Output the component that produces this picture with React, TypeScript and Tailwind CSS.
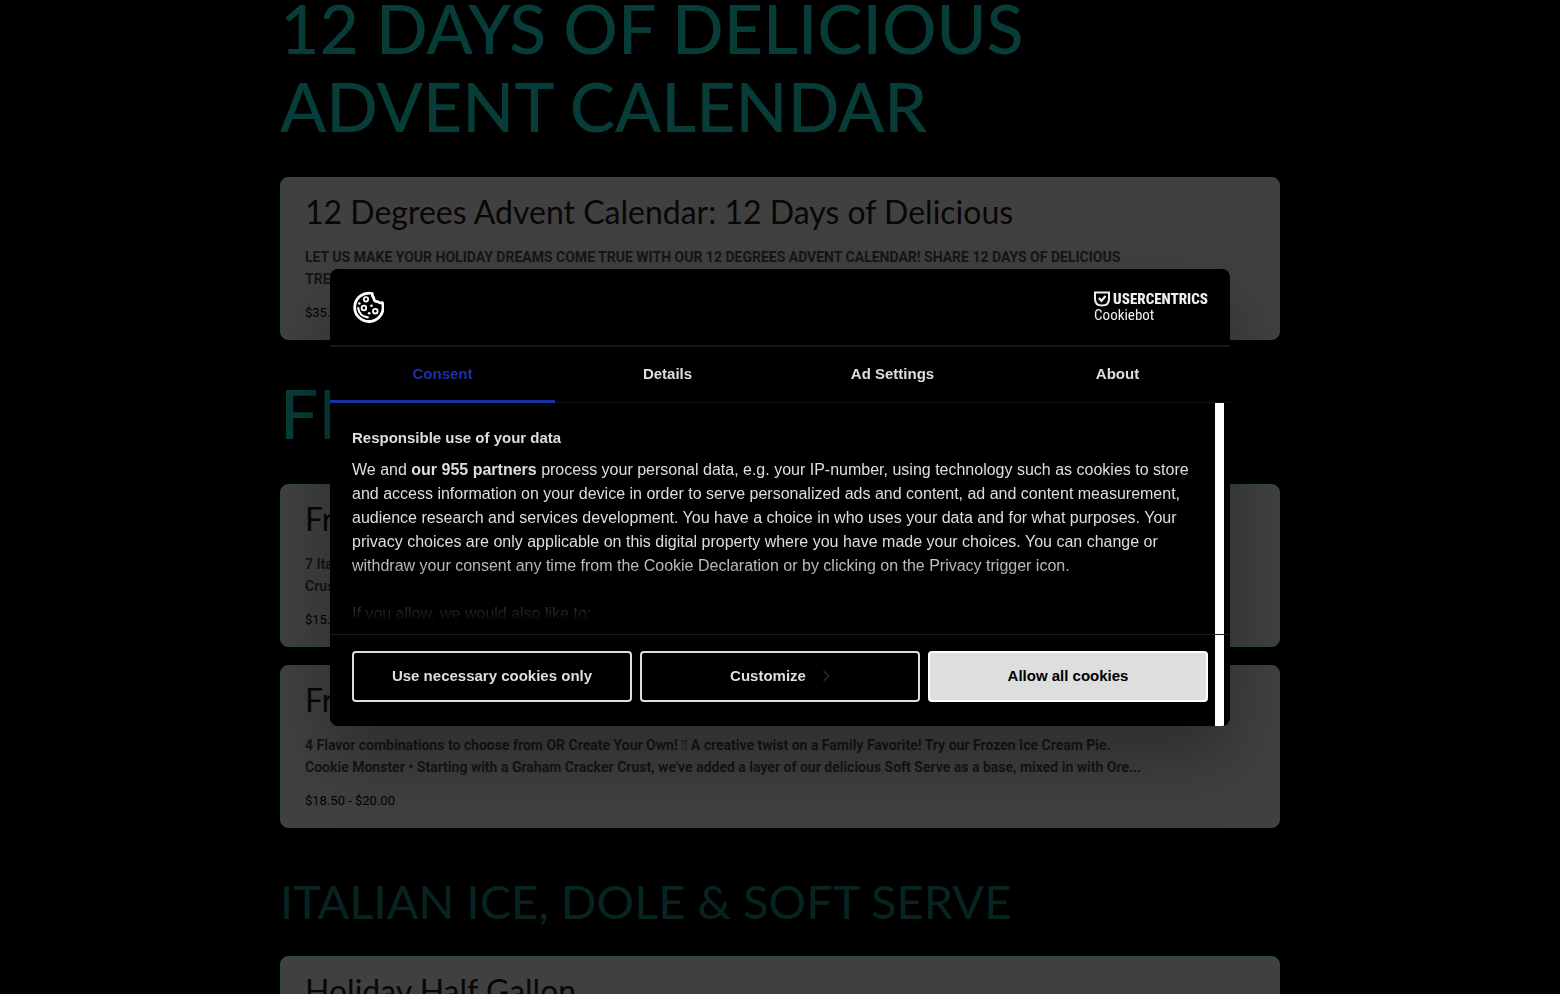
import clsx from 'clsx';

interface MenuItem {
  title: string;
  lines: string[];
  price: string;
}

interface MenuCategory {
  name: string;
  small?: boolean;
  items: MenuItem[];
}

const categories: MenuCategory[] = [
  {
    name: '12 DAYS OF DELICIOUS ADVENT CALENDAR',
    items: [
      {
        title: '12 Degrees Advent Calendar: 12 Days of Delicious',
        lines: [
          'LET US MAKE YOUR HOLIDAY DREAMS COME TRUE WITH OUR 12 DEGREES ADVENT CALENDAR! SHARE 12 DAYS OF DELICIOUS',
          'TREATS',
        ],
        price: '$35.00',
      },
    ],
  },
  {
    name: 'FROZEN PIES',
    items: [
      { title: 'Frozen Pie', lines: ['7 Italian Ice', 'Crust'], price: '$15.00' },
      {
        title: 'Frozen Pie',
        lines: [
          '4 Flavor combinations to choose from OR Create Your Own! \uE0FF A creative twist on a Family Favorite! Try our Frozen Ice Cream Pie.',
          "Cookie Monster • Starting with a Graham Cracker Crust, we've added a layer of our delicious Soft Serve as a base, mixed in with Ore...",
        ],
        price: '$18.50 - $20.00',
      },
    ],
  },
  {
    name: 'ITALIAN ICE, DOLE & SOFT SERVE',
    small: true,
    items: [{ title: 'Holiday Half Gallon', lines: [], price: '' }],
  },
];

const tabs = ['Consent', 'Details', 'Ad Settings', 'About'];

function MenuCard({ title, lines, price }: MenuItem) {
  return (
    <article className="min-h-[163px] rounded-lg border border-[#2c4844] bg-[#404040] px-6 pt-[15px]">
      <h3 className="text-[32px] leading-[38px] text-[#090606]">{title}</h3>
      <div className="mt-[15px] font-['Roboto',sans-serif] text-[14px] leading-[22px] font-bold text-[#151515]">
        {lines.map((line) => (
          <p key={line} className="whitespace-nowrap">
            {line}
          </p>
        ))}
      </div>
      <p className="mt-3 font-['Roboto',sans-serif] text-[13px] leading-[22px] text-black">{price}</p>
    </article>
  );
}

function CookieIcon() {
  return (
    <svg viewBox="0 0 32 32" className="size-8" fill="none" stroke="white" strokeLinecap="round" strokeLinejoin="round">
      <path
        strokeWidth="2.8"
        d="M20.300 2.500A14.200 14.200 0 1 0 30.300 11.600c-1.500.5-3.300.3-4.500-1-2.500.3-4.300-1.500-4-3.900-1.200-1.100-1.800-2.600-1.500-4.200Z"
      />
      <path strokeWidth="2.2" d="M6.200 17.200c.5 5 4.300 8.700 9.600 9.200" />
      <circle cx="14" cy="8.300" r="2.200" strokeWidth="1.800" />
      <circle cx="11.900" cy="17" r="2.300" strokeWidth="1.800" />
      <circle cx="23.300" cy="20.200" r="2.300" strokeWidth="1.800" />
      <g fill="white" stroke="none">
        <circle cx="7.300" cy="12.500" r="1.300" />
        <circle cx="19.500" cy="14.800" r="1.300" />
        <circle cx="17.200" cy="22.200" r="1.300" />
      </g>
    </svg>
  );
}

function Brand() {
  return (
    <a href="#cookiebot" className="block text-[#f0f0f0]" aria-label="Usercentrics Cookiebot">
      <span className="flex items-center gap-[3px]">
        <svg viewBox="0 0 16 16" className="size-4" fill="none" stroke="currentColor">
          <path strokeWidth="2" d="M1 1.500h14v6.500c0 4.200-2.600 6.500-7 6.500s-7-2.300-7-6.500Z" />
          <path strokeWidth="2.200" d="m4.800 7 2.700 2.800 4-4.800" />
        </svg>
        <span className="font-['Roboto_Condensed','Liberation_Sans_Narrow',sans-serif] text-[15px] leading-4 font-extrabold">
          USERCENTRICS
        </span>
      </span>
      <span className="block font-['Roboto_Condensed','Liberation_Sans_Narrow',sans-serif] text-[15px] leading-4">
        Cookiebot
      </span>
    </a>
  );
}

function CookieDialog() {
  return (
    <div
      role="dialog"
      aria-label="Cookie consent"
      className="w-full max-w-[900px] overflow-hidden rounded-lg bg-black font-['Liberation_Sans',sans-serif] text-[#dedede] shadow-[0_32px_68px_rgba(0,0,0,0.3)]"
    >
      <header className="flex items-center justify-between border-b-2 border-[#171717] px-[22px] py-[22px]">
        <CookieIcon />
        <Brand />
      </header>

      <nav className="grid grid-cols-4">
        {tabs.map((tab, i) => (
          <button
            key={tab}
            className={clsx(
              'h-14 text-[15px] font-bold',
              i === 0 ? 'text-[#1c31a8] shadow-[inset_0_-3px_#1c31a0]' : 'shadow-[inset_0_-1px_#111111]'
            )}
          >
            {tab}
          </button>
        ))}
      </nav>

      <div className="relative">
        <div className="absolute top-0 right-[6px] bottom-0 w-[9px] bg-white" />

        <div className="relative h-[231px] overflow-hidden px-[22px] pt-[23px]">
          <h2 className="text-[15px] leading-6 font-bold">Responsible use of your data</h2>
          <p className="mt-2 text-[16px] leading-6">
            We and <strong>our 955 partners</strong> process your personal data, e.g. your IP-number, using technology
            such as cookies to store and access information on your device in order to serve personalized ads and
            content, ad and content measurement, audience research and services development. You have a choice in who
            uses your data and for what purposes. Your privacy choices are only applicable on this digital property
            where you have made your choices. You can change or withdraw your consent any time from the Cookie
            Declaration or by clicking on the Privacy trigger icon.
          </p>
          <p className="mt-6 text-[16px] leading-6">If you allow, we would also like to:</p>
          <div className="absolute right-[15px] bottom-0 left-0 h-20 bg-linear-to-t from-black from-15% to-transparent" />
        </div>

        <footer className="relative grid grid-cols-3 gap-2 border-t border-[#1c1c1c] px-[22px] pt-4 pb-6 text-[15px] font-bold">
          <button className="h-[51px] rounded border-2 border-[#dedede]">Use necessary cookies only</button>
          <button className="flex h-[51px] items-center justify-center gap-4 rounded border-2 border-[#dedede]">
            Customize
            <svg viewBox="0 0 8 14" className="h-3.5 w-2 text-[#222222]" fill="none" stroke="currentColor" strokeWidth="2">
              <path d="m1.500 2 5 5-5 5" />
            </svg>
          </button>
          <button className="h-[51px] rounded border-2 border-white bg-[#dedede] text-black">Allow all cookies</button>
        </footer>
      </div>
    </div>
  );
}

export default function App() {
  return (
    <div className="h-screen overflow-hidden bg-black font-['Lato',sans-serif]">
      <main className="mx-auto -mt-[11px] max-w-[1000px]">
        {categories.map((category, i) => (
          <section key={category.name} className={clsx(i > 0 && 'pt-[34px]')}>
            <h2
              className={clsx(
                category.small
                  ? 'pt-2 pb-6 text-[47px] leading-[62px] text-[#082422]'
                  : 'pb-8 text-[68px] leading-[78px] font-medium text-[#073c39]'
              )}
            >
              {category.name}
            </h2>
            <div className="flex flex-col gap-[18px]">
              {category.items.map((item) => (
                <MenuCard key={item.lines.join()} {...item} />
              ))}
            </div>
          </section>
        ))}
      </main>

      <div className="fixed inset-0 flex items-center justify-center">
        <CookieDialog />
      </div>
    </div>
  );
}
